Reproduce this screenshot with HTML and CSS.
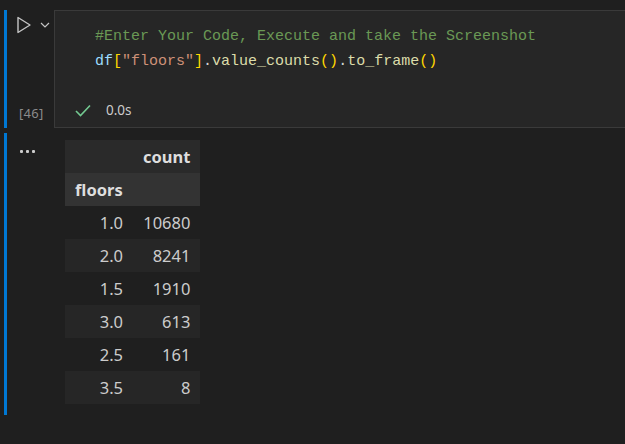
FILE: index.html
```html
<!DOCTYPE html>
<html>
<head>
<meta charset="utf-8">
<link rel="stylesheet" href="styles.css">
</head>
<body>
<div class="cell code-cell">
  <div class="bar"></div>
  <div class="gutter">
    <div class="run">
      <svg width="16" height="18" viewBox="0 0 16 18"><path d="M2 1.5 L14 9 L2 16.5 Z" fill="none" stroke="#c5c5c5" stroke-width="1.4" stroke-linejoin="round"/></svg>
      <svg class="chev" width="10" height="6" viewBox="0 0 10 6"><path d="M1 1 L5 5 L9 1" fill="none" stroke="#c5c5c5" stroke-width="1.2"/></svg>
    </div>
    <div class="count-label">[46]</div>
  </div>
  <div class="editor">
    <div class="code">
      <div class="line"><span class="cm">#Enter Your Code, Execute and take the Screenshot</span></div>
      <div class="line"><span class="var">df</span><span class="br">[</span><span class="str">"floors"</span><span class="br">]</span><span class="pl">.</span><span class="fn">value_counts</span><span class="br">()</span><span class="pl">.</span><span class="fn">to_frame</span><span class="br">()</span></div>
    </div>
    <div class="status">
      <svg width="16" height="13" viewBox="0 0 16 13"><path d="M1 7 L5.5 11.5 L15 1.5" fill="none" stroke="#73c991" stroke-width="1.6"/></svg>
      <span class="time">0.0s</span>
    </div>
  </div>
</div>
<div class="cell out-cell">
  <div class="bar"></div>
  <div class="gutter">
    <div class="dots"><span></span><span></span><span></span></div>
  </div>
  <div class="output">
    <table class="df">
      <thead>
        <tr class="h1"><th></th><th>count</th></tr>
        <tr class="h2"><th class="idxname">floors</th><th></th></tr>
      </thead>
      <tbody>
        <tr><th>1.0</th><td>10680</td></tr>
        <tr><th>2.0</th><td>8241</td></tr>
        <tr><th>1.5</th><td>1910</td></tr>
        <tr><th>3.0</th><td>613</td></tr>
        <tr><th>2.5</th><td>161</td></tr>
        <tr><th>3.5</th><td>8</td></tr>
      </tbody>
    </table>
  </div>
</div>
</body>
</html>
```

FILE: styles.css
```css
html, body {
  margin: 0;
  padding: 0;
  background: #1f1f1f;
  width: 625px;
  height: 444px;
  overflow: hidden;
  font-family: "Noto Sans", "Open Sans", sans-serif;
}
.cell {
  display: flex;
  position: relative;
}
.code-cell {
  margin-top: 10px;
  height: 118px;
}
.out-cell {
  margin-top: 5px;
  height: 282px;
}
.bar {
  width: 3px;
  margin-left: 4px;
  background: #0078d4;
  flex: none;
}
.gutter {
  width: 47px;
  flex: none;
  display: flex;
  flex-direction: column;
  justify-content: space-between;
}
.run {
  display: flex;
  align-items: center;
  padding-left: 9px;
  margin-top: 6px;
  height: 18px;
}
.run .chev {
  margin-left: 8px;
  margin-top: -1px;
}
.count-label {
  color: #8b8b8b;
  font-size: 13px;
  padding-left: 12px;
  margin-bottom: 8px;
  line-height: 14px;
  letter-spacing: 0.3px;
}
.editor {
  flex: 1;
  background: #262626;
  border: 1px solid #3a3a3a;
  border-right: none;
  display: flex;
  flex-direction: column;
  justify-content: space-between;
}
.code {
  padding: 13px 0 0 40px;
  font-family: "Liberation Mono", "DejaVu Sans Mono", monospace;
  font-size: 15px;
}
.line {
  white-space: pre;
  height: 25px;
  line-height: 25px;
}
.cm { color: #6a9955; }
.var { color: #9cdcfe; }
.br { color: #ffd700; }
.str { color: #ce9178; }
.pl { color: #d4d4d4; }
.fn { color: #dcdcaa; }
.status {
  display: flex;
  align-items: center;
  padding-left: 20px;
  height: 26px;
  margin-bottom: 4px;
}
.time {
  color: #cccccc;
  font-size: 13.5px;
  margin-left: 15px;
}
.dots {
  display: flex;
  gap: 3px;
  padding-left: 13px;
  margin-top: 17px;
}
.dots span {
  width: 3px;
  height: 3px;
  background: #cccccc;
  border-radius: 1px;
}
.output {
  padding-top: 7px;
  padding-left: 11px;
}
.df {
  border-collapse: collapse;
  font-size: 16.5px;
  color: #cccccc;
}
.df th, .df td {
  height: 33px;
  padding: 0 10px;
  text-align: right;
  font-weight: normal;
  line-height: 33px;
}
.df thead th {
  font-weight: bold;
  color: #dedede;
}
.df .h1 { background: #2a2a2a; }
.df .h2 { background: #333333; }
.df .h2 .idxname { text-align: left; }
.df tbody th { width: 48px; }
.df tbody td { width: 47px; }
.df tbody tr:nth-child(even) { background: #262626; }
```
